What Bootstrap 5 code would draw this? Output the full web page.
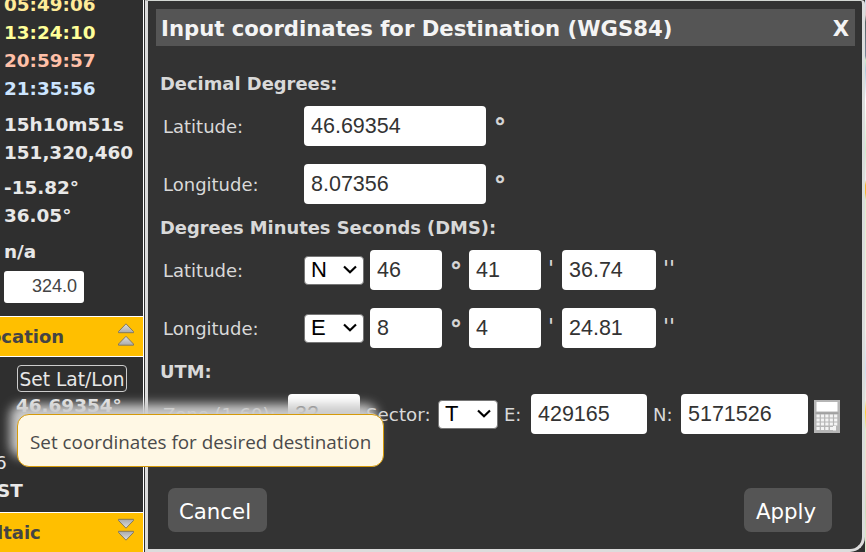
<!DOCTYPE html>
<html lang="en">
<head>
<meta charset="utf-8">
<title>Input coordinates</title>
<link href="https://cdn.jsdelivr.net/npm/bootstrap@5.3.0/dist/css/bootstrap.min.css" rel="stylesheet">
<style>
body{width:866px;height:552px;font-family:"DejaVu Sans",sans-serif;background:#2f2f2f;color:#d9d9d9;font-size:18px;white-space:nowrap}
.side{width:144px;border-right:1px solid #fff;background:#2f2f2f;font-weight:700;color:#e8e8e8;line-height:28px;font-size:18.4px}
.side>*{flex-shrink:0}
.side .ln{height:28px;padding-left:4px}
.times{margin-top:-9px}
.ylw{color:#ffeb99}.lem{color:#ffff99}.sal{color:#ffc0a8}.sky{color:#cce5ff}
.az{width:80px;height:32px;margin:5px 0 0 4px;padding:0 7px 1px 0;border:0;border-radius:3px;background:#fff;color:#444;font:18px "Liberation Sans",sans-serif;text-align:right}
.sec{height:41px;border-top:1px solid #fff;border-bottom:1px solid #fff;background:#ffbf00;color:#444;font-size:18px;padding-right:9px}
.setbtn{width:110px;height:27px;margin:8px 0 0 17px;padding:0;border:1px solid #ccc;border-radius:4px;background:transparent;color:#e8e8e8;font-size:18.6px;line-height:28px}
.dlg{width:720px;margin-left:1px;border:3px solid #dcdcdc;border-top:1px solid #d3d7d3;border-radius:0 4px 15px 0;background:#333;padding:8px 7px 0 8px}
.strip{width:1px;background:linear-gradient(#cde 0,#dcc 15px,#566 22px,#789 56px,#cec 60px,#acd 70px,#fff 100px,#cec 150px,#eee 180px,#f5b733 185px,#f5b733 193px,#dec 200px,#eef0e6 330px,#cde 370px,#eed 400px,#fc3 412px,#dec 430px,#edc 470px,#cdb 510px,#dec)}
.ttl{height:37px;background:#555;color:#f4f4f4;font-weight:700;font-size:21.2px;padding:2px 6px 0 5px}
.hd{font-weight:700;font-size:17.9px;padding-left:4px;line-height:24px}
.frow{height:40px;padding-left:7px}
.frow>span{padding-top:1px}
.lab{width:141px}
.frow input{height:40px;border:0;border-radius:4px;background:#fff;color:#333;font:21.5px "Liberation Sans",sans-serif;padding:0 7px}
.pick{width:60px;height:29px;border:1px solid #767676;border-radius:4px;background:#fff;color:#000;font:22px/26px "Liberation Sans",sans-serif;padding:0 6px}
.pick svg{margin-bottom:2px}
.frow .deg{width:27px;padding:3px 0 0 8px;font-size:24px;-webkit-text-stroke:.6px #d9d9d9}
.frow .pr{width:21px;padding:0 0 4px 7px;font-size:22px}
.w182{width:182px}.w72{width:72px}.w94{width:94px}.w116{width:116px}.w127{width:127px}
.actbtn{height:44px;border:0;border-radius:7px;background:#555;color:#fff;font-size:21.3px;padding:0;line-height:48px}
.tip{position:absolute;left:17px;top:414px;width:367px;height:53px;border:1px solid #d59a0a;border-radius:12px;background:#fff8e5;color:#4a4a4a;font:18.85px/54px "Open Sans",sans-serif;padding-left:12px;box-shadow:-7px -10px 11px #ccc}
</style>
<script src="https://cdn.jsdelivr.net/npm/bootstrap@5.3.0/dist/js/bootstrap.bundle.min.js"></script>
</head>
<body class="d-flex overflow-hidden position-relative m-0">
<svg width="0" height="0" class="position-absolute"><defs>
<linearGradient id="g" x2="0" y2="1"><stop stop-color="#ddd"/><stop offset="1" stop-color="#aaa"/></linearGradient>
<g id="tri"><path d="M8 .8 15.500 8.500V9.700H.5V8.500Z" fill="url(#g)" stroke="#857a5a" stroke-width="1"/></g>
</defs></svg>
<aside class="side flex-shrink-0 h-100 d-flex flex-column overflow-hidden">
  <div class="times">
    <div class="ln ylw">05:49:06</div><div class="ln lem">13:24:10</div><div class="ln sal">20:59:57</div><div class="ln sky">21:35:56</div>
  </div>
  <div class="mt-2"><div class="ln">15h10m51s</div><div class="ln">151,320,460</div></div>
  <div style="margin-top:7px"><div class="ln">-15.82°</div><div class="ln">36.05°</div></div>
  <div class="ln mt-2">n/a</div>
  <input class="az" value="324.0">
  <div class="sec d-flex align-items-center justify-content-between" style="margin-top:13px"><span style="margin-left:-11px">ocation</span>
    <svg width="16" height="24" viewBox="0 0 16 24" style="margin-bottom:3px"><use href="#tri" y="0"/><use href="#tri" y="12.500"/></svg></div>
  <button class="setbtn">Set Lat/Lon</button>
  <div class="ln" style="padding-left:16px">46.69354°</div>
  <div class="ln fw-normal" style="margin:29px 0 0 -9px">6</div>
  <div class="ln" style="margin-left:-7px">ST</div>
  <div class="sec d-flex align-items-center justify-content-between" style="margin-top:7px"><span style="margin-left:-3px">ltaic</span>
    <svg width="16" height="24" viewBox="0 0 16 24" style="margin-bottom:5px"><g transform="matrix(1 0 0 -1 0 24)"><use href="#tri" y="1"/><use href="#tri" y="13"/></g></svg></div>
</aside>
<div class="d-flex flex-grow-1">
<main class="dlg h-100 flex-shrink-0">
  <div class="ttl d-flex align-items-center justify-content-between"><span>Input coordinates for Destination (WGS84)</span><span>X</span></div>
  <div class="hd" style="margin:26px 0 10px">Decimal Degrees:</div>
  <div class="frow d-flex align-items-center"><span class="lab">Latitude:</span><input class="w182" value="46.69354"><span class="deg">°</span></div>
  <div class="frow d-flex align-items-center" style="margin-top:18px"><span class="lab">Longitude:</span><input class="w182" value="8.07356"><span class="deg">°</span></div>
  <div class="hd" style="margin:12px 0 10px">Degrees Minutes Seconds (DMS):</div>
  <div class="frow d-flex align-items-center"><span class="lab">Latitude:</span>
    <div class="pick d-flex align-items-center justify-content-between"><span>N</span><svg width="14" height="9" viewBox="0 0 14 9"><path d="M1 1.500 7 7.200l6-5.700" fill="none" stroke="#000" stroke-width="2.200"/></svg></div>
    <input class="w72" value="46" style="margin-left:6px"><span class="deg">°</span><input class="w72" value="41"><span class="pr">'</span><input class="w94" value="36.74"><span class="pr">''</span></div>
  <div class="frow d-flex align-items-center" style="margin-top:18px"><span class="lab">Longitude:</span>
    <div class="pick d-flex align-items-center justify-content-between"><span>E</span><svg width="14" height="9" viewBox="0 0 14 9"><path d="M1 1.500 7 7.200l6-5.700" fill="none" stroke="#000" stroke-width="2.200"/></svg></div>
    <input class="w72" value="8" style="margin-left:6px"><span class="deg">°</span><input class="w72" value="4"><span class="pr">'</span><input class="w94" value="24.81"><span class="pr">''</span></div>
  <div class="hd" style="margin:12px 0 10px">UTM:</div>
  <div class="frow d-flex align-items-center"><span style="width:125px">Zone (1-60):</span><input class="w72" value="32"><span style="width:78px;padding-left:6px;font-size:18.3px">Sector:</span>
    <div class="pick d-flex align-items-center justify-content-between"><span>T</span><svg width="14" height="9" viewBox="0 0 14 9"><path d="M1 1.500 7 7.200l6-5.700" fill="none" stroke="#000" stroke-width="2.200"/></svg></div>
    <span style="width:33px;padding-left:6px">E:</span><input class="w116" value="429165"><span style="width:34px;padding-left:6px">N:</span><input class="w127" value="5171526">
    <svg width="26" height="33" viewBox="0 0 26 33" style="margin:5px 0 0 6px"><path fill="#b5b5b5" d="M0 0h26v33H0z"/><path fill="#fff" d="M2.500 2h21v9.500h-21z"/><path fill="#999" d="M1.500 12.500h23v1.200h-23z"/><path d="M2.500 16h21M2.500 20h21M2.500 24h21M2.500 28.500h12" stroke="#f4f4f4" stroke-width="3" stroke-dasharray="3.200 1.200"/><path d="M16 28.500h3M20.500 26v4.500" stroke="#f4f4f4" stroke-width="3"/></svg></div>
  <div class="d-flex justify-content-between" style="margin:54px 23px 0 12px"><button class="actbtn" style="width:99px;padding-right:5px">Cancel</button><button class="actbtn" style="width:88px;padding-right:4px">Apply</button></div>
</main>
<div class="strip h-100 flex-shrink-0"></div>
</div>
<div class="tip">Set coordinates for desired destination</div>
</body>
</html>
